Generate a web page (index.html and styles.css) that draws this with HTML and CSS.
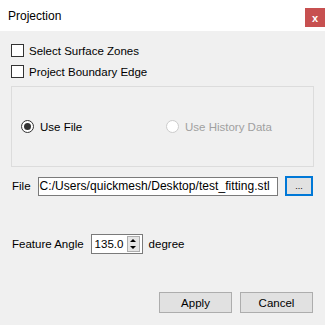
FILE: index.html
```html
<!DOCTYPE html>
<html lang="en">
<head>
  <meta charset="UTF-8" />
  <title>Projection</title>
  <link rel="stylesheet" href="styles.css">
</head>
<body>
  <div class="window">
    <div class="titlebar">
      <span class="title">Projection</span>
      <span class="close">x</span>
    </div>

    <div class="content">
      <div class="check-row">
        <span class="check"></span>
        <span>Select Surface Zones</span>
      </div>
      <div class="check-row">
        <span class="check"></span>
        <span>Project Boundary Edge</span>
      </div>

      <div class="group-box">
        <div class="radio-item first">
          <span class="radio checked"></span>
          <span>Use File</span>
        </div>
        <div class="radio-item disabled">
          <span class="radio"></span>
          <span>Use History Data</span>
        </div>
      </div>

      <div class="file-row">
        <span class="label">File</span>
        <div class="text-input">C:/Users/quickmesh/Desktop/test_fitting.stl</div>
        <div class="browse">...</div>
      </div>

      <div class="angle-row">
        <span class="label">Feature Angle</span>
        <div class="spinbox">
          <span class="spin-value">135.0</span>
          <div class="spin-arrows">
            <span class="arrow up"></span>
            <span class="arrow down"></span>
          </div>
        </div>
        <span>degree</span>
      </div>

      <div class="buttons">
        <div class="btn">Apply</div>
        <div class="btn">Cancel</div>
      </div>
    </div>
  </div>
</body>
</html>
```

FILE: styles.css
```css
body {
  margin: 0;
  font-family: "Liberation Sans", Arial, sans-serif;
  font-size: 11.5px;
  color: #000;
  background: #f0f0f0;
}

.window {
  width: 325px;
  height: 325px;
  background: #f0f0f0;
}

.titlebar {
  height: 31px;
  background: #fff;
  display: flex;
  justify-content: space-between;
  align-items: flex-start;
}
.title {
  margin-left: 8px;
  margin-top: 9px;
  font-size: 12px;
}
.close {
  margin-top: 8px;
  width: 20px;
  height: 19px;
  background: #c75050;
  color: #fff;
  font-weight: bold;
  font-size: 11px;
  display: flex;
  align-items: center;
  justify-content: center;
}

.content {
  padding: 13px 12px 0 11px;
}

.check-row {
  display: flex;
  align-items: center;
  height: 13px;
  margin-bottom: 8px;
}
.check {
  width: 11px;
  height: 11px;
  border: 1px solid #333;
  background: #fff;
  margin-right: 5px;
}

.group-box {
  margin-top: 1px;
  width: 292px;
  height: 79px;
  border: 1px solid #dcdcdc;
  display: flex;
  align-items: center;
  padding-left: 9px;
}
.radio-item {
  display: flex;
  align-items: center;
}
.radio-item.first {
  width: 145px;
}
.radio {
  width: 11px;
  height: 11px;
  border: 1px solid #333;
  border-radius: 50%;
  background: #fff;
  margin-right: 6px;
  display: flex;
  align-items: center;
  justify-content: center;
}
.radio.checked::after {
  content: "";
  width: 7px;
  height: 7px;
  border-radius: 50%;
  background: #333;
}
.disabled {
  color: #a0a0a0;
}
.disabled .radio {
  border-color: #cccccc;
}

.file-row {
  display: flex;
  align-items: center;
  margin-top: 9px;
  height: 20px;
}
.label {
  margin-left: 1px;
}
.text-input {
  margin-left: 7px;
  width: 240px;
  height: 17px;
  line-height: 17px;
  border: 1px solid #7a7a7a;
  background: #fff;
  padding-left: 1px;
  font-size: 12px;
  letter-spacing: 0.05px;
  white-space: nowrap;
  overflow: hidden;
}
.browse {
  margin-left: 7px;
  width: 24px;
  height: 16px;
  border: 2px solid #0078d7;
  background: #e1e1e1;
  font-size: 9px;
  display: flex;
  align-items: center;
  justify-content: center;
}

.angle-row {
  display: flex;
  align-items: center;
  margin-top: 38px;
  height: 20px;
}
.spinbox {
  margin-left: 7px;
  margin-right: 6px;
  width: 50px;
  height: 18px;
  border: 1px solid #7a7a7a;
  background: #fff;
  display: flex;
  align-items: center;
  justify-content: space-between;
}
.spin-value {
  margin-left: 3px;
}
.spin-arrows {
  width: 11px;
  height: 14px;
  margin-right: 2px;
  border: 1px solid #adadad;
  background: #e5e5e5;
  display: flex;
  flex-direction: column;
  align-items: center;
  justify-content: space-around;
}
.arrow {
  width: 0;
  height: 0;
  border-left: 3px solid transparent;
  border-right: 3px solid transparent;
}
.arrow.up {
  border-bottom: 3px solid #000;
}
.arrow.down {
  border-top: 3px solid #000;
}

.buttons {
  display: flex;
  justify-content: flex-end;
  gap: 8px;
  margin-top: 38px;
}
.btn {
  width: 71px;
  height: 19px;
  border: 1px solid #adadad;
  background: #e1e1e1;
  display: flex;
  align-items: center;
  justify-content: center;
}
```
